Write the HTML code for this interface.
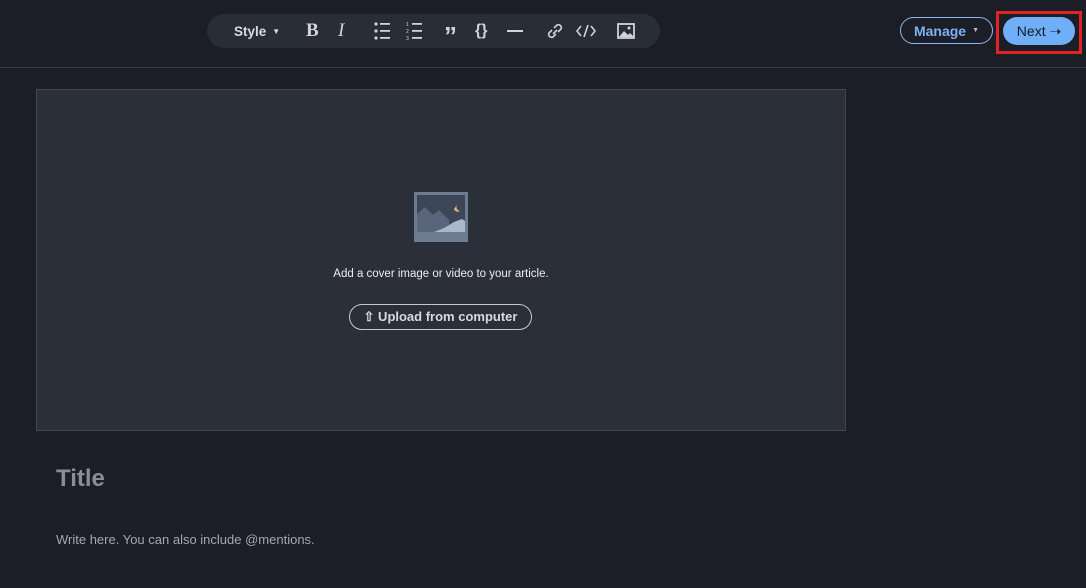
<!DOCTYPE html>
<html><head><style>
*{box-sizing:border-box;margin:0;padding:0}
body{width:1086px;height:588px;background:#1b1e26;font-family:"Liberation Sans",sans-serif;position:relative;overflow:hidden;color:#e6e6e6}
.top{position:absolute;left:0;top:0;width:1086px;height:68px;border-bottom:1px solid #3a3e46}
.tb{position:absolute;left:207px;top:14px;width:453px;height:34px;border-radius:17px;background:#282d36}
.ic{position:absolute;top:0;height:34px;display:flex;align-items:center;color:#d0d3d8}
.cover{position:absolute;left:36px;top:89px;width:810px;height:342px;background:#2a2f39;border:1px solid #41464f}
.btn{position:absolute;border-radius:14px;font-size:14px;display:flex;align-items:center;justify-content:center;font-weight:bold}
</style></head><body>
<div class="top">
<div class="tb">
 <div class="ic" style="left:27px;font-size:13.5px;font-weight:bold;color:#d8dade">Style <span style="font-size:8px;margin-left:6px">▼</span></div>
 <div class="ic" style="left:99px;font-size:19px;font-weight:bold;font-family:'Liberation Serif',serif">B</div>
 <div class="ic" style="left:131px;font-size:19px;font-style:italic;font-family:'Liberation Serif',serif">I</div>
 <svg class="ic" style="left:166px" width="18" height="34" viewBox="0 0 18 34"><g fill="#d0d3d8"><circle cx="3" cy="10" r="1.6"/><circle cx="3" cy="17" r="1.6"/><circle cx="3" cy="24" r="1.6"/><rect x="7" y="9" width="10" height="1.8"/><rect x="7" y="16" width="10" height="1.8"/><rect x="7" y="23" width="10" height="1.8"/></g></svg>
 <svg class="ic" style="left:198px" width="18" height="34" viewBox="0 0 18 34"><g fill="#d0d3d8"><rect x="7" y="9" width="10" height="1.8"/><rect x="7" y="16" width="10" height="1.8"/><rect x="7" y="23" width="10" height="1.8"/><text x="1" y="12" font-size="5">1</text><text x="1" y="19" font-size="5">2</text><text x="1" y="26" font-size="5">3</text></g></svg>
 <div class="ic" style="left:237px;font-size:26px;font-weight:bold;padding-top:10px">”</div>
 <div class="ic" style="left:268px;font-size:16px;font-weight:bold">{}</div>
 <div class="ic" style="left:300px"><div style="width:16px;height:2px;background:#d0d3d8"></div></div>
 <svg class="ic" style="left:339px" width="18" height="34" viewBox="0 0 18 34"><g fill="none" stroke="#d0d3d8" stroke-width="1.6"><path d="M8 14l3-3a3 3 0 0 1 4 4l-3 3"/><path d="M10 20l-3 3a3 3 0 0 1-4-4l3-3"/><path d="M7 20l4-4"/></g></svg>
 <svg class="ic" style="left:369px" width="20" height="34" viewBox="0 0 20 34"><g fill="none" stroke="#d0d3d8" stroke-width="1.6"><path d="M5 12l-4 5 4 5M15 12l4 5-4 5M12 11l-4 12"/></g></svg>
 <svg class="ic" style="left:410px" width="18" height="34" viewBox="0 0 18 34"><rect x="1" y="10" width="16" height="14" fill="none" stroke="#d0d3d8" stroke-width="1.8"/><path d="M2 23l5-6 4 4 2-2 4 4z" fill="#d0d3d8"/><circle cx="12" cy="14" r="1.5" fill="#d0d3d8"/></svg>
</div>
<div class="btn" style="left:900px;top:17px;width:93px;height:27px;border:1px solid #8fb5ee;color:#7fb0f5;font-size:14px">Manage <span style="font-size:7px;margin-left:6px;color:#bbb">▼</span></div>
<div style="position:absolute;left:996px;top:11px;width:86px;height:43px;border:3px solid #e52222"></div>
<div class="btn" style="left:1003px;top:17px;width:72px;height:28px;background:#70aef8;color:#111a2a;font-weight:normal;font-size:14px">Next ➝</div>
</div>
<div class="cover">
 <svg style="position:absolute;left:377px;top:102px" width="54" height="50" viewBox="0 0 54 50"><rect width="54" height="50" fill="#6e7c92"/><rect x="3" y="3" width="48" height="37" fill="#3d4656"/><path d="M3 40V22l8-7 8 8 6-5 10 10v12z" fill="#59657a"/><path d="M20 40l10-4 10-6 8-3 3 2v11z" fill="#a9b9cb"/><path d="M43 13a4 4 0 0 0 3 6 4 4 0 0 1-6-2z" fill="#f0b86a"/></svg>
 <div style="position:absolute;left:0;width:808px;top:178px;text-align:center;font-size:11.5px;color:#eceef0">Add a cover image or video to your article.</div>
 <div style="position:absolute;left:312px;top:214px;width:183px;height:26px;border:1px solid #c5c8cd;border-radius:13px;text-align:center;line-height:24px;font-size:13px;font-weight:bold;color:#d8dadf">⇧ Upload from computer</div>
</div>
<div style="position:absolute;left:56px;top:465px;font-size:24px;font-weight:bold;color:#8a8d93">Title</div>
<div style="position:absolute;left:56px;top:532px;font-size:13px;color:#a5a8ad">Write here. You can also include @mentions.</div>
</body></html>
